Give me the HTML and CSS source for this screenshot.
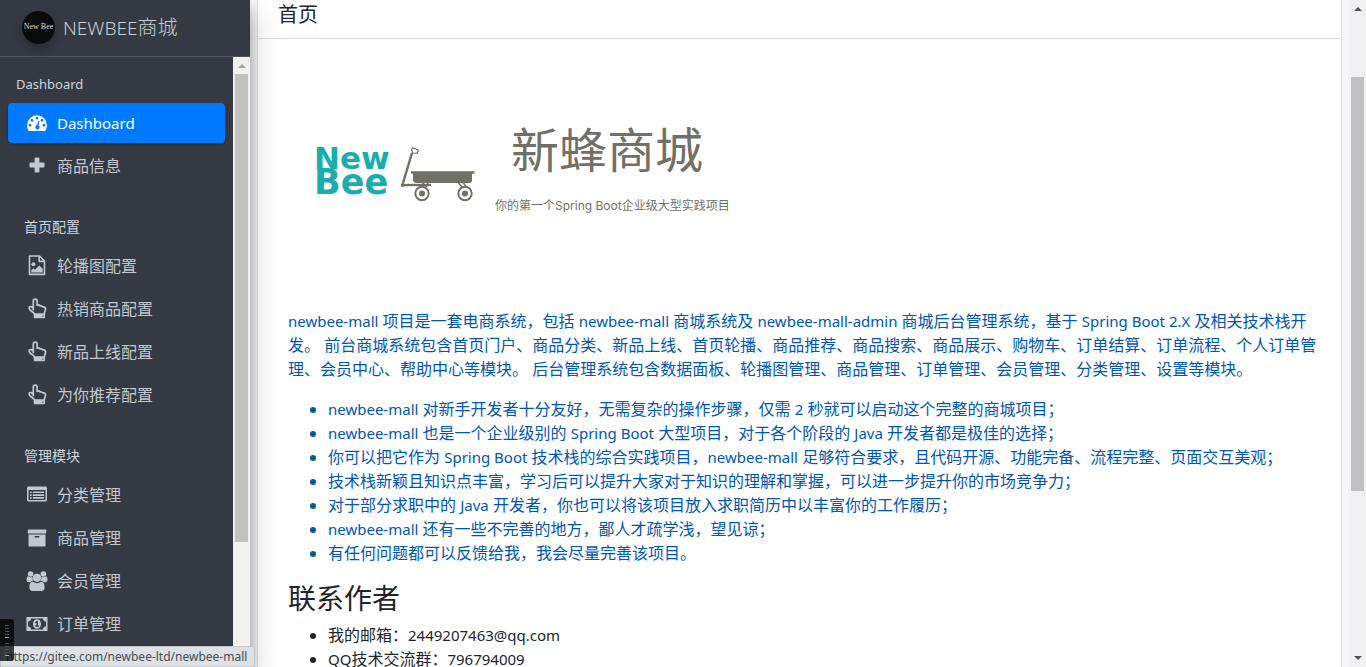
FILE: index.html
```html
<!DOCTYPE html>
<html lang="zh-CN">
<head>
<meta charset="utf-8">
<title>NEWBEE商城</title>
<link rel="stylesheet" href="styles.css">
</head>
<body>
<svg class="sprite" aria-hidden="true">
  <symbol id="hand" viewBox="0 0 22 22">
    <path d="M7.300 11.600V3a1.900 1.900 0 0 1 3.800 0v4.300c1.300-.6 2.400-.3 3 .7 1.200-.4 2.200 0 2.700.9 1.500-.4 2.700.6 2.700 2.200 0 2-1.300 3-1.300 5.200H8.600C8 14.200 5.800 14 4 11.900c-1-1.200-1.200-1.900-.7-2.800.9-1.100 2.500-.6 4 1z" fill="none" stroke="currentColor" stroke-width="1.700" stroke-linejoin="round"/>
    <path fill-rule="evenodd" d="M8.600 15.500h9.600a.9.900 0 0 1 .9.900v2.900a.9.900 0 0 1-.9.900H8.600a.9.900 0 0 1-.9-.9v-2.900a.9.900 0 0 1 .9-.9zm7.700 2v1.200h1.200v-1.200z" fill="currentColor"/>
  </symbol>
</svg>
<div class="page">
  <aside class="sidebar">
    <a class="brand" href="#">
      <span class="brand-logo">New Bee</span>
      <span class="brand-name"><span class="en">NEWBEE</span>商城</span>
    </a>
    <div class="sidebar-body">
      <nav class="menu">
        <h6 class="menu-title first">Dashboard</h6>
        <a class="item active" href="#">
          <svg class="icon" viewBox="0 0 22 22"><path fill-rule="evenodd" d="M11 3.200A10 10 0 0 0 1 13.200c0 1.900.5 3.600 1.500 5.200.2.300.5.600.9.600h15.200c.4 0 .7-.3.9-.6a9.600 9.600 0 0 0 1.500-5.200A10 10 0 0 0 11 3.200zM4 11.800a1.400 1.400 0 1 1 0 2.800 1.400 1.400 0 0 1 0-2.800zM6 6.900a1.400 1.400 0 1 1 0 2.800 1.400 1.400 0 0 1 0-2.800zM11 4.700a1.400 1.400 0 1 1 0 2.800 1.400 1.400 0 0 1 0-2.800zM16 6.900a1.400 1.400 0 1 1 0 2.800 1.400 1.400 0 0 1 0-2.800zM18 11.800a1.400 1.400 0 1 1 0 2.800 1.400 1.400 0 0 1 0-2.800zM12.300 8.800l1.300.4-1 4.200a2.200 2.200 0 1 1-1.400-.3z" fill="currentColor"/></svg>
          <span class="en">Dashboard</span></a>
        <a class="item" href="#">
          <svg class="icon" viewBox="0 0 22 22"><path d="M9.600 2.500h2.800c.6 0 1 .4 1 1v4.100h4.100c.6 0 1 .4 1 1v2.800c0 .6-.4 1-1 1h-4.100v4.100c0 .6-.4 1-1 1H9.600c-.6 0-1-.4-1-1v-4.100H4.500c-.6 0-1-.4-1-1V8.600c0-.6.4-1 1-1h4.100V3.500c0-.6.4-1 1-1z" fill="currentColor"/></svg>
          <span>商品信息</span></a>
        <h6 class="menu-title">首页配置</h6>
        <a class="item" href="#">
          <svg class="icon" viewBox="0 0 22 22"><path d="M3.500 1h10l5 5v13.400H3.500z M13.200 1v5.400h5.300" fill="none" stroke="currentColor" stroke-width="1.600" stroke-linejoin="round"/><circle cx="7.400" cy="9.200" r="2" fill="currentColor"/><path d="M5.300 17.600v-2.400l2-2 1.600 1.600 4.400-4.300 3.400 3.300v3.800z" fill="currentColor"/></svg>
          <span>轮播图配置</span></a>
        <a class="item" href="#"><svg class="icon"><use href="#hand"/></svg><span>热销商品配置</span></a>
        <a class="item" href="#"><svg class="icon"><use href="#hand"/></svg><span>新品上线配置</span></a>
        <a class="item" href="#"><svg class="icon"><use href="#hand"/></svg><span>为你推荐配置</span></a>
        <h6 class="menu-title">管理模块</h6>
        <a class="item" href="#">
          <svg class="icon" viewBox="0 0 22 22"><path fill-rule="evenodd" d="M2.600 2.500h16.800c.9 0 1.600.7 1.600 1.500v12c0 .8-.7 1.500-1.600 1.500H2.600C1.700 17.500 1 16.800 1 16V4c0-.8.7-1.500 1.600-1.500zM2.500 6v9.500c0 .3.2.5.5.5h16c.3 0 .5-.2.500-.5V6z" fill="currentColor"/><path d="M4 7.500h1.600v1.600H4zm2.800 0H18v1.600H6.800zM4 10.300h1.600v1.600H4zm2.800 0H18v1.600H6.800zM4 13.100h1.600v1.600H4zm2.800 0H18v1.600H6.800z" fill="currentColor"/></svg>
          <span>分类管理</span></a>
        <a class="item" href="#">
          <svg class="icon" viewBox="0 0 22 22"><path fill-rule="evenodd" d="M1.800 2.500h18.400v4H1.800zM2.500 7.500h17v11.300c0 .4-.3.700-.7.700H3.200a.7.700 0 0 1-.7-.7zM9.200 9.100a.7.700 0 0 0 0 1.400h3.600a.7.700 0 0 0 0-1.400z" fill="currentColor"/></svg>
          <span>商品管理</span></a>
        <a class="item" href="#">
          <svg class="icon" viewBox="0 0 22 22"><g fill="currentColor"><circle cx="4.600" cy="4" r="2.800"/><circle cx="17.400" cy="4" r="2.800"/><path d="M.5 9.800c0-2 .6-3.600 1.700-3.500 1.800 1.200 3.300 1 4.400.5 0 2 .2 3 1 4-1.200 0-2.200.5-3 1.400H2.400C1.200 12.200.5 11.500.5 9.800zM21.500 9.800c0-2-.6-3.600-1.700-3.500-1.800 1.200-3.300 1-4.400.5 0 2-.2 3-1 4 1.200 0 2.200.5 3 1.400h2.200c1.200 0 1.900-.7 1.900-2.400z"/><circle cx="11" cy="7.800" r="4.100"/><path d="M3.400 17.500c0-3.500 1-5.700 3.600-5.700 2.600 1.800 5.400 1.800 8 0 2.600 0 3.600 2.200 3.600 5.700 0 2.200-1.200 3.400-3 3.400H6.400c-1.800 0-3-1.200-3-3.400z"/></g></svg>
          <span>会员管理</span></a>
        <a class="item" href="#">
          <svg class="icon" viewBox="0 0 22 22"><path fill-rule="evenodd" d="M.5 4h21v14H.5zM5 5.500A3 3 0 0 1 2 8.500v5a3 3 0 0 1 3 3h12a3 3 0 0 1 3-3v-5a3 3 0 0 1-3-3z" fill="currentColor"/><path fill-rule="evenodd" d="M11 6.200c2.400 0 4 2 4 4.800s-1.600 4.800-4 4.800-4-2-4-4.800 1.600-4.800 4-4.800zM10.500 8L8.900 9.400l.7.900.8-.6v2.900H9.200v1.200h3.900v-1.200h-1.200V8z" fill="currentColor"/></svg>
          <span>订单管理</span></a>
      </nav>
      <div class="scrollbar light"><i class="arrow up"></i><i class="thumb"></i></div>
    </div>
  </aside>
  <main class="content">
    <section class="card">
      <header class="card-header"><h3>首页</h3></header>
      <div class="card-body">
        <div class="banner">
          <div class="wordmark"><span>New</span><span class="bee">Bee</span></div>
          <svg class="wagon" viewBox="0 0 76 58">
            <g fill="none" stroke="#707067">
              <path d="M12 7L3 37" stroke-width="2.400"/>
              <path d="M3 39h28" stroke-width="2.400"/>
              <path d="M11.500 3.200l1.500-1.500 5.500 2.600-1.400 3-4.500-.3z" stroke-width="1.200"/>
              <path d="M25 35l-5 7M62 35l5 7M29 35l-3 6M57 35l5 6" stroke-width="1.500"/>
            </g>
            <g fill="#707067">
              <path d="M11 25.200h63.500v2.600H72v6.500c0 1.500-1 2.700-2.500 2.700h-53c-1.500 0-3.500-1.200-3.500-2.700v-6.500h-2z"/>
              <circle cx="2.700" cy="39" r="2"/>
            </g>
            <g fill="#fff" stroke="#707067" stroke-width="2"><circle cx="22" cy="47.500" r="6.700"/><circle cx="65" cy="47.500" r="6.700"/></g>
            <circle cx="22" cy="47.500" r="3" fill="#707067"/><circle cx="65" cy="47.500" r="3" fill="#707067"/>
          </svg>
          <div class="slogan"><strong>新蜂商城</strong><span>你的第一个Spring Boot企业级大型实践项目</span></div>
        </div>
        <a class="intro" href="https://gitee.com/newbee-ltd/newbee-mall">
          <p><span class="en">newbee-mall</span> 项目是一套电商系统，包括 <span class="en">newbee-mall</span> 商城系统及 <span class="en">newbee-mall-admin</span> 商城后台管理系统，基于 <span class="en">Spring Boot 2.X</span> 及相关技术栈开发。 前台商城系统包含首页门户、商品分类、新品上线、首页轮播、商品推荐、商品搜索、商品展示、购物车、订单结算、订单流程、个人订单管理、会员中心、帮助中心等模块。 后台管理系统包含数据面板、轮播图管理、商品管理、订单管理、会员管理、分类管理、设置等模块。</p>
          <ul>
            <li><span class="en">newbee-mall</span> 对新手开发者十分友好，无需复杂的操作步骤，仅需 <span class="en">2</span> 秒就可以启动这个完整的商城项目；</li>
            <li><span class="en">newbee-mall</span> 也是一个企业级别的 <span class="en">Spring Boot</span> 大型项目，对于各个阶段的 <span class="en">Java</span> 开发者都是极佳的选择；</li>
            <li>你可以把它作为 <span class="en">Spring Boot</span> 技术栈的综合实践项目，<span class="en">newbee-mall</span> 足够符合要求，且代码开源、功能完备、流程完整、页面交互美观；</li>
            <li>技术栈新颖且知识点丰富，学习后可以提升大家对于知识的理解和掌握，可以进一步提升你的市场竞争力；</li>
            <li>对于部分求职中的 <span class="en">Java</span> 开发者，你也可以将该项目放入求职简历中以丰富你的工作履历；</li>
            <li><span class="en">newbee-mall</span> 还有一些不完善的地方，鄙人才疏学浅，望见谅；</li>
            <li>有任何问题都可以反馈给我，我会尽量完善该项目。</li>
          </ul>
        </a>
        <h3 class="contact">联系作者</h3>
        <ul>
          <li>我的邮箱：<span class="en">2449207463@qq.com</span></li>
          <li><span class="en">QQ</span>技术交流群：<span class="en">796794009</span></li>
        </ul>
      </div>
    </section>
  </main>
  <div class="scrollbar"><i class="arrow up"></i><i class="thumb"></i><i class="arrow down"></i></div>
</div>
<div class="status">https://gitee.com/newbee-ltd/newbee-mall</div>
<div class="meter"><i class="bars orange"></i><i class="bars green"></i></div>
</body>
</html>
```
FILE: styles.css
```css
* { box-sizing: border-box; }
body {
  margin: 0;
  font-family: "Noto Sans", "Noto Sans CJK SC", sans-serif;
  font-size: 16px;
  line-height: 24px;
  color: #212529;
  background: #f4f6f9;
  overflow: hidden;
}
a { color: inherit; text-decoration: none; }
h3, h6, p, ul { margin: 0; font-weight: 400; }
.sprite { display: none; }
.en { font-size: 15px; }

.page { display: flex; height: 100vh; }

/* Sidebar */
.sidebar {
  flex: 0 0 250px;
  display: flex;
  flex-direction: column;
  background: #353a42;
  color: #c2c7d0;
  position: relative;
  z-index: 2;
  box-shadow: 0 14px 28px rgba(0, 0, 0, .25), 0 10px 10px rgba(0, 0, 0, .22);
}
.brand {
  display: flex;
  flex: 0 0 57px;
  align-items: flex-start;
  gap: 8px;
  padding: 11px 0 0 22px;
  border-bottom: 1px solid #4b545c;
  color: #c9cccf;
}
.brand-logo {
  width: 33px;
  height: 33px;
  border-radius: 50%;
  background: #0a0b0d;
  color: #ddd;
  font: 8px/32px "Liberation Serif", serif;
  text-align: center;
  white-space: nowrap;
  box-shadow: 0 6px 10px rgba(0, 0, 0, .25);
}
.brand-name { padding-top: 5px; font-size: 20px; font-weight: 300; }
.brand-name .en { font-size: 19px; }
.sidebar-body { display: flex; flex: 1; min-height: 0; }
.menu { flex: 1; padding: 0 8px; overflow: hidden; }
.menu-title {
  height: 57px;
  padding: 26px 16px 0;
  font-size: 14px;
  color: #d0d4db;
}
.menu-title.first { height: 46px; padding: 15px 8px 0; font-size: 13px; }
.item {
  display: flex;
  align-items: center;
  gap: 9px;
  height: 40px;
  margin-bottom: 3px;
  padding-left: 18px;
  border-radius: 4px;
}
.item.active {
  color: #fff;
  background: #007bff;
  box-shadow: 0 1px 3px rgba(0, 0, 0, .4);
}
.icon { width: 22px; height: 22px; }

/* Scroll bars */
.scrollbar {
  flex: 0 0 17px;
  display: flex;
  flex-direction: column;
  align-items: center;
  background: #f1f1f1;
}
.thumb { width: 13px; height: 62%; margin-top: 66px; background: #c1c1c1; }
.arrow { border: 4px solid transparent; }
.arrow.up { border-bottom-color: #505050; border-top: 0; margin-top: 7px; }
.arrow.down { border-top-color: #505050; border-bottom: 0; margin: auto 0 7px; }
.light .arrow.up { border-bottom-color: #a3a3a3; }
.light .thumb { height: 468px; margin-top: 6px; }

/* Content */
.content { flex: 1; min-width: 0; padding: 0 8px; }
.card {
  min-height: 100vh;
  background: #fff;
  box-shadow: 0 0 1px rgba(0, 0, 0, .5);
}
.card-header { height: 39px; padding: 3px 20px; border-bottom: 1px solid #dfdfdf; }
.card-header h3 { font-size: 20px; }
.card-body { padding: 0 20px 0 30px; }
.banner { display: flex; height: 270px; padding: 79px 0 0 26px; }
.wordmark {
  width: 86px;
  padding-top: 28px;
  color: #1badad;
  font-family: "DejaVu Sans", sans-serif;
  font-size: 31px;
  font-weight: 700;
  line-height: 24px;
}
.wordmark span { display: block; }
.wordmark .bee { font-size: 35px; }
.wagon { width: 76px; height: 58px; margin-top: 28px; }
.slogan { padding-left: 19px; color: #707067; }
.slogan strong { display: block; padding-left: 16px; font-size: 48px; font-weight: 400; line-height: 64px; }
.slogan span { display: block; margin-top: 12px; font: 12px/24px Inter, "Noto Sans CJK SC", sans-serif; }
.intro { display: block; color: #0056b3; }
.intro p, .intro ul { margin-bottom: 16px; }
.card-body ul { padding-left: 40px; }
.contact { margin-bottom: 8px; font-size: 28px; line-height: 34px; }

/* Overlays */
.status {
  position: fixed;
  left: 0;
  bottom: 0;
  z-index: 3;
  height: 21px;
  padding: 0 7px 0 5px;
  background: #dee1e6;
  border: 1px solid #c6c9ce;
  border-radius: 0 4px 0 0;
  color: #4a4d51;
  font-size: 12px;
  line-height: 19px;
}
.meter {
  position: fixed;
  left: 0;
  bottom: 6px;
  z-index: 4;
  display: grid;
  gap: 5px;
  padding: 6px 5px 5px;
  background: rgba(0, 0, 0, .75);
  border-radius: 0 3px 3px 0;
}
.bars {
  width: 4px;
  height: 13px;
  background: repeating-linear-gradient(#555 0 1px, transparent 1px 3px);
}
.orange { border-bottom: 1px solid #f7a52b; }
.green { border-bottom: 1px solid #7be02a; }
```
